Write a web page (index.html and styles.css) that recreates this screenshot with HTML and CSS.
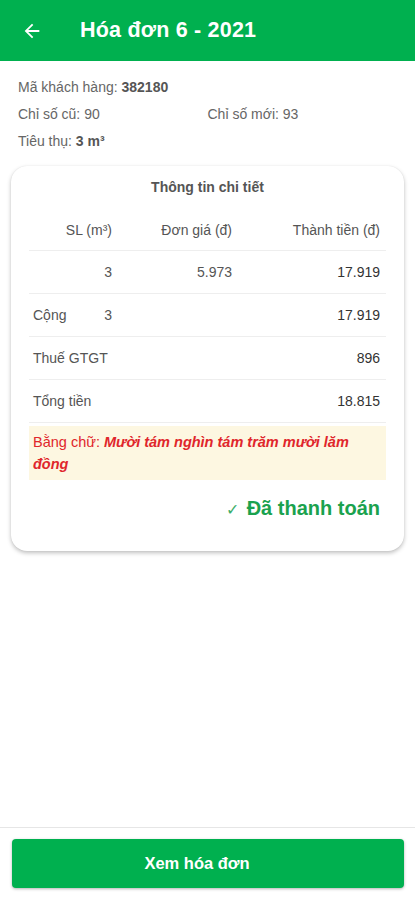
FILE: index.html
```html
<!DOCTYPE html>
<html lang="vi">
<head>
  <meta charset="UTF-8">
  <title>Hóa đơn 6 - 2021</title>
  <link rel="stylesheet" href="styles.css">
</head>
<body>
  <div class="app">
    <!-- thanh tiêu đề -->
    <header class="topbar">
      <svg class="back" width="22" height="22" viewBox="0 0 24 24">
        <path d="M20 11H7.83l5.59-5.59L12 4l-8 8 8 8 1.41-1.41L7.83 13H20v-2z" fill="#fff"/>
      </svg>
      <h1>Hóa đơn 6 - 2021</h1>
    </header>

    <main class="content">
      <div class="info">
        <div class="info-row">Mã khách hàng: <b>382180</b></div>
        <div class="info-row two">
          <span>Chỉ số cũ: 90</span>
          <span>Chỉ số mới: 93</span>
        </div>
        <div class="info-row">Tiêu thụ: <b>3 m³</b></div>
      </div>

      <div class="card">
        <h2>Thông tin chi tiết</h2>
        <table class="detail">
          <tr class="head">
            <td class="c1">SL (m³)</td>
            <td class="c2">Đơn giá (đ)</td>
            <td class="c3">Thành tiền (đ)</td>
          </tr>
          <tr>
            <td class="c1">3</td>
            <td class="c2">5.973</td>
            <td class="c3 strong">17.919</td>
          </tr>
          <tr>
            <td class="c1"><span class="lbl">Cộng</span>3</td>
            <td class="c2"></td>
            <td class="c3 strong">17.919</td>
          </tr>
          <tr>
            <td class="c1"><span class="lbl">Thuế GTGT</span></td>
            <td class="c2"></td>
            <td class="c3 strong">896</td>
          </tr>
          <tr>
            <td class="c1"><span class="lbl">Tổng tiền</span></td>
            <td class="c2"></td>
            <td class="c3 strong">18.815</td>
          </tr>
        </table>

        <p class="words">Bằng chữ: <em>Mười tám nghìn tám trăm mười lăm đồng</em></p>

        <div class="paid"><span class="tick">✓</span> Đã thanh toán</div>
      </div>
    </main>

    <footer class="bottom">
      <button class="btn">Xem hóa đơn</button>
    </footer>
  </div>
</body>
</html>
```

FILE: styles.css
```css
html, body {
  margin: 0;
  padding: 0;
}
body {
  font-family: 'Liberation Sans', Arial, sans-serif;
  background: #fff;
  color: #555;
}
.app {
  display: flex;
  flex-direction: column;
  height: 900px;
}
.topbar {
  background: #00b04f;
  height: 61px;
  display: flex;
  align-items: center;
  padding: 0 21px;
  box-sizing: border-box;
}
.topbar h1 {
  margin: 0 0 0 37px;
  color: #fff;
  font-size: 21.5px;
  font-weight: 700;
  letter-spacing: 0.2px;
}
.content {
  flex: 1;
  padding: 0 11px;
}
.info {
  padding: 13px 7px 0;
  font-size: 14px;
  color: #666;
}
.info-row {
  height: 27px;
  line-height: 27px;
}
.info-row b {
  font-weight: 700;
  color: #555;
}
.info-row.two {
  display: flex;
}
.info-row.two span {
  width: 196px;
}
.card {
  margin-top: 11px;
  border-radius: 16px;
  background: #fff;
  box-shadow: 0 2px 4px rgba(0,0,0,0.25), 0 0 1px rgba(0,0,0,0.1);
  padding: 10px 18px 31px;
}
.card h2 {
  margin: 0;
  text-align: center;
  font-size: 14px;
  font-weight: 700;
  color: #555;
  line-height: 22px;
}
.detail {
  width: 100%;
  border-collapse: collapse;
  font-size: 14px;
  margin-top: 11px;
}
.detail td {
  height: 42px;
  border-bottom: 1px solid #eee;
  padding: 0;
  text-align: right;
}
.detail tr.head td {
  height: 41px;
  color: #555;
}
.detail .c1 { width: 83px; }
.detail .c2 { width: 120px; }
.detail .c3 { padding-right: 6px; }
.detail .strong { color: #333; }
.lbl {
  float: left;
  padding-left: 4px;
}
.words {
  margin: 3px 0 0;
  background: #fdf7e1;
  color: #e0262b;
  font-size: 14.5px;
  line-height: 22px;
  padding: 5px 4px 5px;
}
.words em {
  font-weight: 700;
}
.paid {
  text-align: right;
  color: #1aa24e;
  font-size: 20px;
  font-weight: 700;
  margin-top: 17px;
  padding-right: 6px;
}
.paid .tick {
  font-weight: 400;
  font-size: 16px;
  color: #3cae6a;
  margin-right: 2px;
}
.bottom {
  border-top: 1px solid #e6e6e6;
  padding: 11px 11px 12px 12px;
}
.btn {
  width: 100%;
  height: 49px;
  border: none;
  border-radius: 4px;
  background: #00b04f;
  color: #fff;
  font-family: inherit;
  font-size: 16.5px;
  font-weight: 700;
  padding: 0 22px 0 0;
  box-shadow: 0 1px 3px rgba(0,0,0,0.3);
}
```
